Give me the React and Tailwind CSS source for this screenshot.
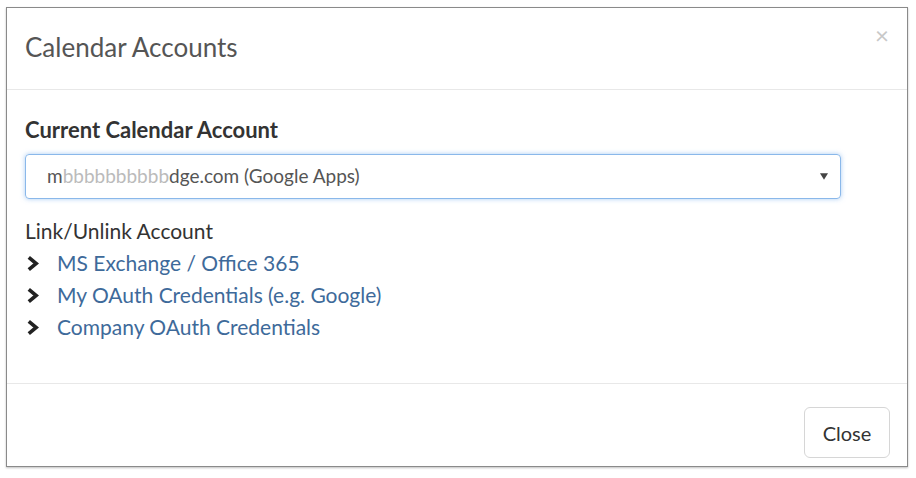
import React from 'react';

const links = [
  'MS Exchange / Office 365',
  'My OAuth Credentials (e.g. Google)',
  'Company OAuth Credentials',
];

function Chevron() {
  return (
    <svg viewBox="0 0 12 16" className="w-[13px] h-[17px]" fill="none">
      <path d="M2.5 2.2 L9.5 8 L2.5 13.8" stroke="#222" strokeWidth="3.4" strokeLinejoin="miter" />
    </svg>
  );
}

export default function App() {
  return (
    <div className="w-[916px] h-[478px] bg-white pt-[7px] pl-[6px]" style={{ fontFamily: 'Lato, "Open Sans", sans-serif' }}>
      <div className="w-[902px] h-[460px] border border-[#8a8a8a] bg-white flex flex-col shadow-[0_1px_2px_rgba(0,0,0,0.25)]">
        {/* header */}
        <div className="h-[82px] border-b border-[#e8e8e8] flex items-center justify-between pl-[18px] pr-[18px]">
          <h4 className="text-[26px] text-[#555] font-normal -mt-[2px]">Calendar Accounts</h4>
          <span className="text-[24px] leading-none text-[#c8c8c8] -mt-[28px]">×</span>
        </div>

        {/* body */}
        <div className="flex-1 pl-[18px] pt-[27px]">
          <div className="text-[22px] font-bold text-[#333] leading-[26px]">Current Calendar Account</div>
          <div className="mt-[11px] w-[816px] h-[45px] rounded-[4px] border border-[#8ab8ea] shadow-[0_0_5px_rgba(102,164,233,0.55)] flex items-center justify-between pl-[21px] pr-[12px]">
            <span className="text-[19px] text-[#555]">
              m<span className="text-[#bbb]">bbbbbbbbbb</span>dge.com (Google Apps)
            </span>
            <svg viewBox="0 0 10 8" className="w-[8px] h-[7px]">
              <path d="M0 0 H10 L5 8 Z" fill="#444" />
            </svg>
          </div>

          <div className="mt-[16px] text-[21px] text-[#333] leading-[32px]">Link/Unlink Account</div>
          <ul className="flex flex-col">
            {links.map((l) => (
              <li key={l} className="h-[32px] flex items-center">
                <span className="w-[32px] pl-[1px] flex items-center"><Chevron /></span>
                <a className="text-[21px] text-[#3e6a9a]">{l}</a>
              </li>
            ))}
          </ul>
        </div>

        {/* footer */}
        <div className="h-[83px] border-t border-[#e8e8e8] flex items-center justify-end pr-[17px]">
          <button className="w-[86px] h-[51px] rounded-[6px] border border-[#d6d6d6] bg-white text-[20px] text-[#333] mt-[15px]">
            Close
          </button>
        </div>
      </div>
    </div>
  );
}
